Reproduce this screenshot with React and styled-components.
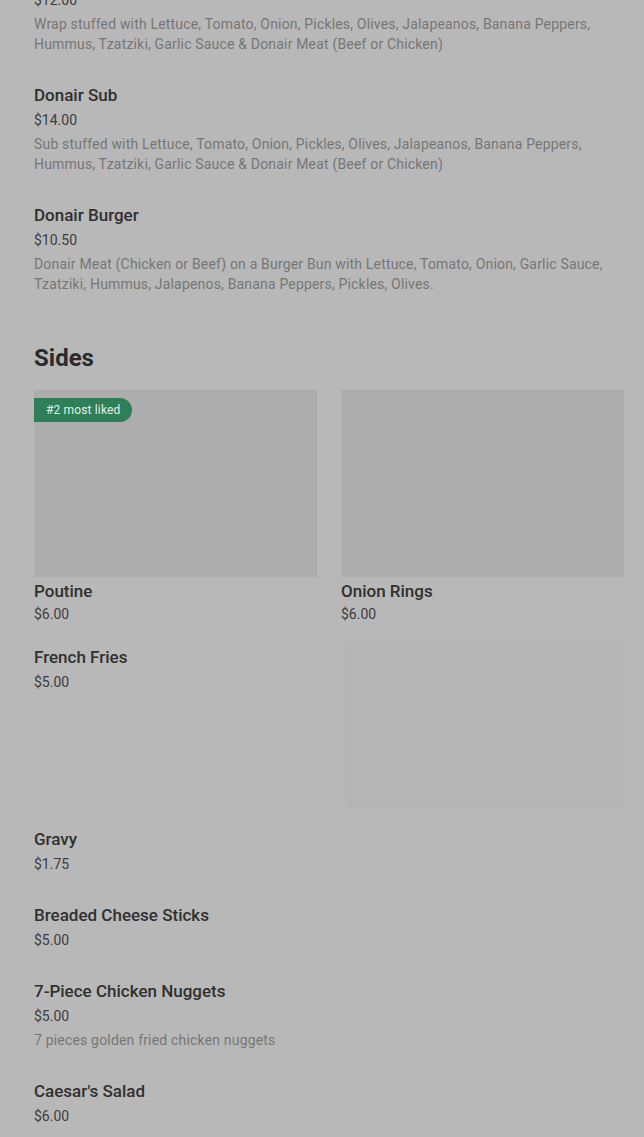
import React from "react";
import styled, { createGlobalStyle } from "styled-components";

const Global = createGlobalStyle`
  html, body { margin: 0; padding: 0; background: #b8b8b8; }
  body { font-family: Roboto, Inter, "Noto Sans", sans-serif; color: #2b2b2b; overflow: hidden; }
  * { box-sizing: border-box; }
`;

const Page = styled.div`
  padding: 0 20px 0 34px;
  margin-top: -37px;
  display: flex;
  flex-direction: column;
`;

const List = styled.div`
  display: flex;
  flex-direction: column;
  gap: 29px;
`;

const Item = styled.div`
  display: flex;
  flex-direction: column;
`;

const Title = styled.div`
  font-size: 17px;
  font-weight: 500;
  line-height: 24px;
  color: #303030;
`;

const Price = styled.div`
  font-size: 14px;
  line-height: 20px;
  margin-top: ${(p) => (p.$tight ? 1 : 3)}px;
  color: #3d3d3d;
`;

const Desc = styled.div`
  font-size: 14px;
  line-height: 20px;
  margin-top: 4px;
  color: #767676;
  letter-spacing: 0.18px;
  max-width: 590px;
`;

const SectionTitle = styled.h2`
  margin: 48px 0 16px;
  font-size: 24px;
  font-weight: 700;
  line-height: 32px;
  color: #2b2b2b;
`;

const CardGrid = styled.div`
  display: grid;
  grid-template-columns: 1fr 1fr;
  column-gap: 24px;
`;

const Card = styled.div`
  display: flex;
  flex-direction: column;
`;

const CardImage = styled.div`
  position: relative;
  height: 187px;
  background: #adadad;
  margin-bottom: 2px;
`;

const Badge = styled.span`
  position: absolute;
  top: 8px;
  left: 0;
  height: 24px;
  padding: 0 12px;
  display: inline-flex;
  align-items: center;
  background: #2f7f58;
  color: #e4efe9;
  font-size: 12px;
  letter-spacing: 0.15px;
  border-radius: 0 12px 12px 0;
`;

const Row = styled.div`
  display: flex;
  justify-content: space-between;
  margin-top: 21px;
  margin-bottom: 22px;
`;

const RowText = styled.div`
  display: flex;
  flex-direction: column;
`;

const RowImage = styled.div`
  width: 276px;
  height: 160px;
  background: #b6b6b6;
  box-shadow: -2px 2px 3px rgba(0, 0, 0, 0.03);
`;

const topItems = [
  {
    title: "Donair Wrap",
    price: "$12.00",
    desc: "Wrap stuffed with Lettuce, Tomato, Onion, Pickles, Olives, Jalapeanos, Banana Peppers, Hummus, Tzatziki, Garlic Sauce & Donair Meat (Beef or Chicken)",
  },
  {
    title: "Donair Sub",
    price: "$14.00",
    desc: "Sub stuffed with Lettuce, Tomato, Onion, Pickles, Olives, Jalapeanos, Banana Peppers, Hummus, Tzatziki, Garlic Sauce & Donair Meat (Beef or Chicken)",
  },
  {
    title: "Donair Burger",
    price: "$10.50",
    desc: "Donair Meat (Chicken or Beef) on a Burger Bun with Lettuce, Tomato, Onion, Garlic Sauce, Tzatziki, Hummus, Jalapenos, Banana Peppers, Pickles, Olives.",
  },
];

const sideItems = [
  { title: "Gravy", price: "$1.75" },
  { title: "Breaded Cheese Sticks", price: "$5.00" },
  { title: "7-Piece Chicken Nuggets", price: "$5.00", desc: "7 pieces golden fried chicken nuggets" },
  { title: "Caesar's Salad", price: "$6.00" },
];

export default function App() {
  return (
    <>
      <Global />
      <Page>
        <List>
          {topItems.map((it) => (
            <Item key={it.title}>
              <Title>{it.title}</Title>
              <Price>{it.price}</Price>
              <Desc>{it.desc}</Desc>
            </Item>
          ))}
        </List>
        <SectionTitle>Sides</SectionTitle>
        <CardGrid>
          <Card>
            <CardImage>
              <Badge>#2 most liked</Badge>
            </CardImage>
            <Title>Poutine</Title>
            <Price $tight>$6.00</Price>
          </Card>
          <Card>
            <CardImage />
            <Title>Onion Rings</Title>
            <Price $tight>$6.00</Price>
          </Card>
        </CardGrid>
        <Row>
          <RowText>
            <Title>French Fries</Title>
            <Price>$5.00</Price>
          </RowText>
          <RowImage />
        </Row>
        <List>
          {sideItems.map((it) => (
            <Item key={it.title}>
              <Title>{it.title}</Title>
              <Price>{it.price}</Price>
              {it.desc && <Desc>{it.desc}</Desc>}
            </Item>
          ))}
        </List>
      </Page>
    </>
  );
}
